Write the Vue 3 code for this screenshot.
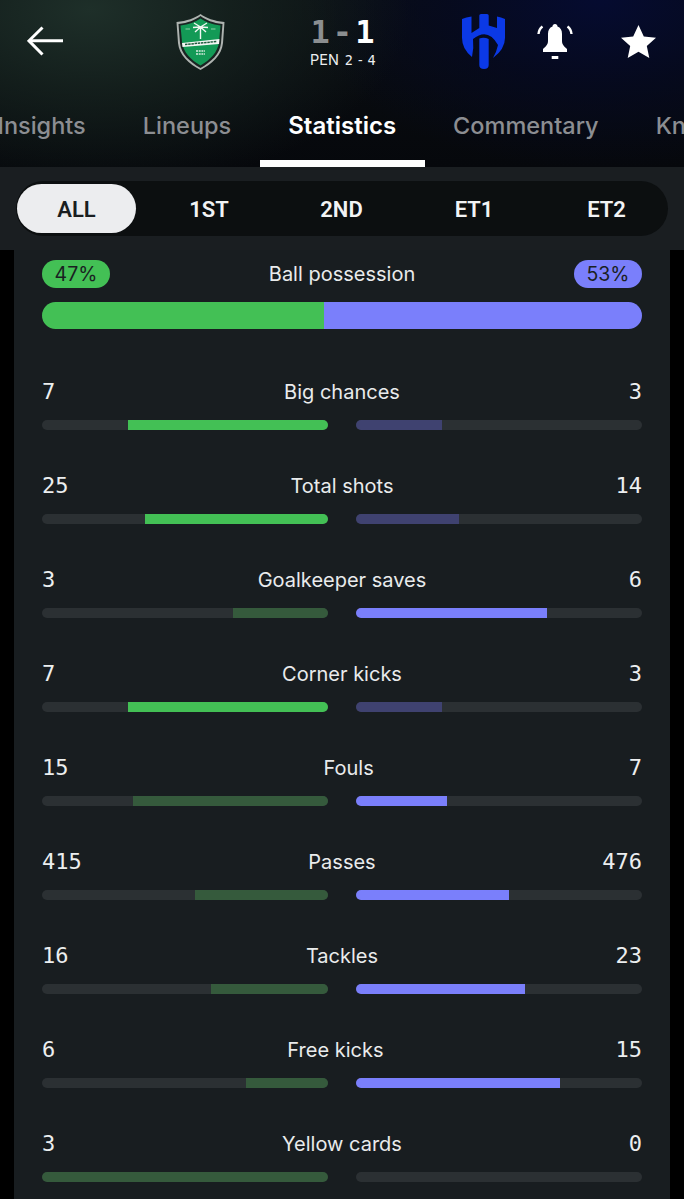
<script setup>
const tabs = [
  { name: 'Insights' },
  { name: 'Lineups' },
  { name: 'Statistics', active: true },
  { name: 'Commentary' },
  { name: 'Knockout' }
]
const periods = ['ALL', '1ST', '2ND', 'ET1', 'ET2']
const rows = [
  { label: 'Big chances', a: '7', b: '3', pa: 70, pb: 30, win: 'a' },
  { label: 'Total shots', a: '25', b: '14', pa: 64, pb: 36, win: 'a' },
  { label: 'Goalkeeper saves', a: '3', b: '6', pa: 33.3, pb: 66.7, win: 'b' },
  { label: 'Corner kicks', a: '7', b: '3', pa: 70, pb: 30, win: 'a' },
  { label: 'Fouls', a: '15', b: '7', pa: 68.2, pb: 31.8, win: 'b' },
  { label: 'Passes', a: '415', b: '476', pa: 46.6, pb: 53.4, win: 'b' },
  { label: 'Tackles', a: '16', b: '23', pa: 41, pb: 59, win: 'b' },
  { label: 'Free kicks', a: '6', b: '15', pa: 28.6, pb: 71.4, win: 'b' },
  { label: 'Yellow cards', a: '3', b: '0', pa: 100, pb: 0, win: 'b' }
]
</script>

<template>
  <div class="page">
    <header class="head">
      <div class="top">
        <svg class="back" width="36" height="30" viewBox="0 0 36 30" fill="none" stroke="#fff" stroke-width="3">
          <path d="M15.500 1.500 2 14.800 15.500 28.500" />
          <path d="M2 14.800H36" />
        </svg>

        <svg class="crest" width="49" height="56" viewBox="0 0 49 56">
          <path d="M24.500 0 C30 4 38 7 48.500 8 L47 29 C46 41 36 50 24.500 56 C13 50 3 41 2 29 L0.500 8 C11 7 19 4 24.500 0Z" fill="#aeb3b0" />
          <path d="M24.500 2 C30 6 37 9 46.500 10 L45 29 C44 40 35 48 24.500 54 C14 48 5 40 4 29 L2.500 10 C12 9 19 6 24.500 2Z" fill="#1a2422" />
          <path d="M24.500 4.500 C30 8 36 10.500 44.500 11.500 L43 28 C42 38 34 46 24.500 51.500 C15 46 7 38 6 28 L4.500 11.500 C13 10.500 19 8 24.500 4.500Z" fill="#139a56" />
          <path d="M6 29 L43.500 25 L43 30 L6.500 33Z" fill="#f4f6f4" />
          <path d="M9 30.500 L41 27.500" stroke="#1d5a3c" stroke-width="1.500" stroke-dasharray="2.500 .7" />
          <path d="M24.500 25V13M24.500 13 18 9M24.500 13 31 9M24.500 13 17 13.500M24.500 13 32 13.500M24.500 13 19 18M24.500 13 30 18" stroke="#f2f7f3" stroke-width="1.400" fill="none" />
          <path d="M20 37H29M20 40H29" stroke="#d8ecdf" stroke-width="1.300" stroke-dasharray="2 .7" />
          <path d="M9.500 15H14M35 15H39.500" stroke="#8fd0a8" stroke-width="1.200" />
        </svg>

        <div class="score">
          <div class="score-line"><span class="dim">1</span><span class="dash">-</span><span>1</span></div>
          <div class="pen"><span class="pen-word">PEN</span><span class="pen-num">2 - 4</span></div>
        </div>

        <svg class="hilal" width="45" height="56" viewBox="0 0 45 56" fill="#0b39e6">
          <path d="M1 5 Q5 3.200 10.500 2.500 V19 L18.300 14 V1.500 Q18.300 0 20 0 H26 Q27.700 0 27.700 1.500 V11.500 L36 14 V2.500 Q40 3.200 44 5 V24 Q44 35 32 44 Q35.500 38 37 31 Q27 13 12 25 Q13 34 11 43 Q1 35 1 24Z" />
          <path d="M18.300 24.500 Q23 23 27.700 25 V51 Q27.700 55 23 55 Q18.300 55 18.300 51Z" />
        </svg>

        <svg class="bell" width="36" height="36" viewBox="0 0 36 36" fill="#fff">
          <path d="M18 0c1.500 0 2.500 1 2.500 2.400 3 1 4.500 3.600 4.500 7.600v7c0 4 3 6 5 8v3H6v-3c2-2 5-4 5-8v-7c0-4 1.500-6.600 4.500-7.600C15.500 1 16.500 0 18 0Z" />
          <rect x="14.700" y="32" width="6.600" height="3" />
          <path d="M1.500 10Q2 5 5.500 2.500" fill="none" stroke="#fff" stroke-width="2.400" />
          <path d="M34.500 10Q34 5 30.500 2.500" fill="none" stroke="#fff" stroke-width="2.400" />
        </svg>

        <svg class="star" width="35" height="33" viewBox="0 0 35 33" fill="#fff">
          <path d="M17.500 0 22.800 11.500 35 12.800 25.800 21 28.300 33 17.500 26.800 6.700 33 9.200 21 0 12.800 12.200 11.500Z" />
        </svg>
      </div>

      <nav class="tabs">
        <div v-for="t in tabs" :key="t.name" class="tab" :class="{ active: t.active }">{{ t.name }}</div>
      </nav>
    </header>

    <div class="filter">
      <div class="pill">
        <div v-for="(p, i) in periods" :key="p" class="seg" :class="{ on: i === 0 }">{{ p }}</div>
      </div>
    </div>

    <main class="panel">
      <section class="poss">
        <div class="poss-head">
          <span class="badge green">47%</span>
          <span class="label">Ball possession</span>
          <span class="badge blue">53%</span>
        </div>
        <div class="poss-bar">
          <div class="poss-a" :style="{ width: '47%' }"></div>
          <div class="poss-b"></div>
        </div>
      </section>

      <section v-for="r in rows" :key="r.label" class="row">
        <div class="row-head">
          <span class="val">{{ r.a }}</span>
          <span class="label">{{ r.label }}</span>
          <span class="val">{{ r.b }}</span>
        </div>
        <div class="bars">
          <div class="track left">
            <div class="fill" :class="r.win === 'a' ? 'g-on' : 'g-off'" :style="{ width: r.pa + '%' }"></div>
          </div>
          <div class="track">
            <div class="fill" :class="r.win === 'b' ? 'b-on' : 'b-off'" :style="{ width: r.pb + '%' }"></div>
          </div>
        </div>
      </section>
    </main>
  </div>
</template>

<style>
html, body { margin: 0; background: #000; }
</style>

<style scoped>
.page {
  width: 684px;
  height: 1199px;
  overflow: hidden;
  background: #000;
  font-family: Inter, "Noto Sans", sans-serif;
  color: #e9ebec;
}
.head {
  height: 167px;
  overflow: hidden;
  background:
    radial-gradient(ellipse 320px 180px at 90px 10px, #1e2f29 0%, rgba(24, 38, 33, .7) 45%, rgba(12, 20, 20, 0) 100%),
    radial-gradient(ellipse 300px 170px at 600px 0, #050b30 0%, rgba(5, 9, 34, .75) 50%, rgba(4, 6, 18, 0) 100%),
    linear-gradient(180deg, #0a0e12 0%, #06080c 100%);
}
.top {
  height: 84px;
  display: flex;
  align-items: flex-start;
  padding-left: 27px;
}
.back { margin-top: 26px; }
.crest { margin: 14px 0 0 113px; }
.score { margin: 17px 0 0 85px; width: 65px; text-align: center; }
.score-line {
  display: flex;
  justify-content: center;
  gap: 3px;
  height: 31px;
  font: 700 32px/31px "DejaVu Sans Mono", monospace;
  color: #fff;
}
.dim, .dash { color: #8b8e90; }
.pen {
  margin-top: 3px;
  display: flex;
  justify-content: space-between;
  align-items: center;
  line-height: 18px;
  white-space: nowrap;
  color: #eceeef;
}
.pen-word { font-size: 14.500px; }
.pen-num {
  font: 400 13.500px/18px "DejaVu Sans Mono", monospace;
  letter-spacing: -.7px;
  word-spacing: -3.500px;
}
.hilal { margin: 14px 0 0 86px; }
.bell { margin: 24px 0 0 31px; }
.star { margin: 25px 0 0 48px; }

.tabs {
  display: flex;
  margin-left: -31px;
  height: 83px;
}
.tab {
  position: relative;
  flex: none;
  padding: 27px 28.500px 0;
  font-size: 23.500px;
  line-height: 30px;
  font-weight: 500;
  color: #8c8e92;
  white-space: nowrap;
}
.tab.active { color: #fff; font-weight: 600; font-size: 24px; }
.tab.active::after {
  content: "";
  position: absolute;
  left: 0;
  right: 0;
  bottom: 0;
  height: 7px;
  background: #fff;
}

.filter {
  height: 83px;
  box-sizing: border-box;
  padding: 14px 16px;
  background: #1a1e21;
}
.pill {
  height: 55px;
  box-sizing: border-box;
  padding: 3px 2px 3px 1px;
  display: flex;
  justify-content: space-between;
  background: #0c0f10;
  border-radius: 28px;
}
.seg {
  width: 119px;
  border-radius: 25px;
  text-align: center;
  font: 600 22px/51px Roboto, sans-serif;
  color: #f2f3f4;
}
.seg.on {
  background: #ecedef;
  color: #1a1e21;
}

.panel {
  margin: 0 14px;
  height: 949px;
  box-sizing: border-box;
  padding: 10px 28px 0;
  background: #181d20;
}
.poss-head, .row-head {
  height: 28px;
  display: flex;
  align-items: center;
  justify-content: space-between;
}
.label {
  font-size: 20px;
  font-weight: 400;
  line-height: 28px;
  color: #e9ebec;
  white-space: nowrap;
}
.badge {
  width: 68px;
  height: 28px;
  border-radius: 14px;
  text-align: center;
  font: 400 19.500px/28px Inter, sans-serif;
  color: #1a1f22;
}
.green { background: #43c055; }
.blue { background: #7a7ffb; }
.poss-bar {
  margin-top: 14px;
  height: 27px;
  display: flex;
  border-radius: 13.500px;
  overflow: hidden;
}
.poss-a { background: #43c055; }
.poss-b { flex: 1; background: #7a7ffb; }
.row { margin-top: 49px; }
.row ~ .row { margin-top: 42px; }
.val {
  font: 400 22px/28px "DejaVu Sans Mono", monospace;
  color: #eceeef;
}
.bars {
  margin-top: 14px;
  display: flex;
  gap: 28px;
}
.track {
  flex: 1;
  height: 10px;
  display: flex;
  border-radius: 5px;
  overflow: hidden;
  background: #2b3033;
}
.track.left { justify-content: flex-end; }
.fill { height: 100%; }
.g-on { background: #43c055; }
.g-off { background: #355a3c; }
.b-on { background: #7a7ffb; }
.b-off { background: #3f4270; }
</style>
